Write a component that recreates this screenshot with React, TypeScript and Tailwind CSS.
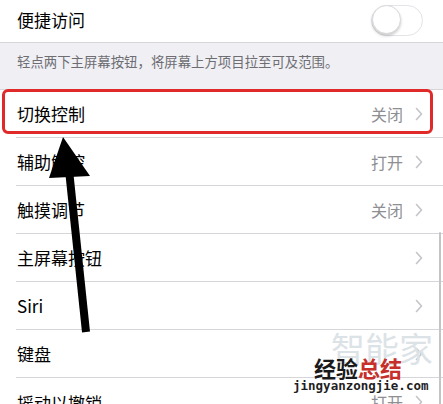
import React from "react";

const font = { fontFamily: '"Noto Sans CJK SC", "Noto Sans", sans-serif' };

function Chevron() {
  return (
    <svg width="8" height="14" viewBox="0 0 8 14" className="ml-[12px]">
      <path d="M1.5 1.5 L6.5 7 L1.5 12.5" fill="none" stroke="#c4c4c9" strokeWidth="1.6" strokeLinecap="round" strokeLinejoin="round" />
    </svg>
  );
}

function Row({ label, detail, last }: { label: string; detail?: string; last?: boolean }) {
  return (
    <div className="h-[48px] flex items-stretch pl-4 bg-white">
      <div className={`flex-1 flex items-center pr-[20px] ${last ? "" : "border-b border-[#d6d6da]"}`}>
        <span className="flex-1 text-[17px] text-black leading-none pl-[1px]">{label}</span>
        {detail && <span className="text-[16px] text-[#8e8e93] leading-none">{detail}</span>}
        <Chevron />
      </div>
    </div>
  );
}

export default function App() {
  const rows: { label: string; detail?: string }[] = [
    { label: "切换控制", detail: "关闭" },
    { label: "辅助触控", detail: "打开" },
    { label: "触摸调节", detail: "关闭" },
    { label: "主屏幕按钮" },
    { label: "Siri" },
    { label: "键盘" },
    { label: "摇动以撤销", detail: "打开" },
  ];
  return (
    <div className="relative w-[443px] h-[404px] overflow-hidden bg-[#efeff4]" style={font}>
      <div className="h-[43px] bg-white border-b border-[#d6d6da] flex items-center pl-[17px] pr-[20px] pb-[3px]">
        <span className="flex-1 text-[17px] text-black leading-none">便捷访问</span>
        <div className="relative w-[52px] h-[31px] rounded-full border-[1.5px] border-[#e3e3e8] bg-white mt-[1px]">
          <div className="absolute left-0 top-[-0.5px] w-[29px] h-[29px] rounded-full bg-white border border-[#d8d8dc] shadow-[0_2px_3px_rgba(0,0,0,0.2)]" />
        </div>
      </div>
      <div className="h-[46px] pl-[17px] pt-[5px]">
        <span className="text-[13.4px] text-[#6d6d72] leading-none">轻点两下主屏幕按钮，将屏幕上方项目拉至可及范围。</span>
      </div>
      <div className="bg-white border-t border-[#d6d6da]">
        {rows.map((r, i) => (
          <Row key={r.label} label={r.label} detail={r.detail} last={i === rows.length - 1} />
        ))}
      </div>

      {/* red highlight box */}
      <div className="absolute left-[2px] top-[89px] w-[431px] h-[45px] border-[3px] border-[#e02a2a] rounded-[6px]" />

      {/* scroll indicator */}
      <div className="absolute right-[2px] top-[232px] w-[2px] h-[180px] bg-[#c4c4c4] rounded-full" />

      {/* watermark */}
      <div className="absolute left-[331px] top-[331px] text-[34px] leading-none text-[#dce3e7]">智能家</div>
      <div className="absolute left-[314px] top-[356px] text-[22px] font-bold leading-none">
        <span className="text-[#1a1a1a]">经验</span>
        <span className="text-[#c62f2a]">总结</span>
      </div>
      <div
        className="absolute left-[293px] top-[380px] text-[12.5px] font-bold leading-none text-[#1f1f1f]"
        style={{ fontFamily: '"DejaVu Sans Mono", "Liberation Mono", monospace' }}
      >
        jingyanzongjie.com
      </div>

      {/* arrow */}
      <svg className="absolute left-0 top-0" width="443" height="404" viewBox="0 0 443 404">
        <line x1="69" y1="170" x2="86" y2="332" stroke="#000" strokeWidth="8" />
        <polygon points="63,137 49,178 90,176" fill="#000" />
      </svg>
    </div>
  );
}
